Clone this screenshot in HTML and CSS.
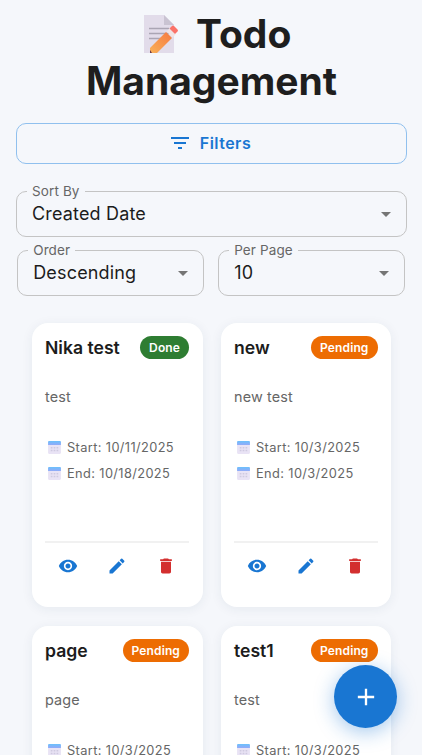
FILE: index.html
```html
<!doctype html>
<html>
<head>
	<title>Todo Management</title>
	<meta charset="utf-8"/>
	<link rel="stylesheet" href="styles.css">
</head>
<body>
	<svg class="defs" width="0" height="0">
		<defs>
			<linearGradient id="calTop" x1="0" y1="0" x2="0" y2="1">
				<stop offset="0" stop-color="#6cc0fc"/>
				<stop offset="1" stop-color="#93aaf8"/>
			</linearGradient>
			<linearGradient id="pencil" x1="0" y1="1" x2="1" y2="0">
				<stop offset="0" stop-color="#f9b25a"/>
				<stop offset="1" stop-color="#f6793f"/>
			</linearGradient>
			<symbol id="cal" viewBox="0 0 14 14">
				<rect x="1" y="1" width="12" height="12" rx="1" fill="#e9e3f5"/>
				<path d="M1 2a1 1 0 0 1 1-1h10a1 1 0 0 1 1 1v2.6H1z" fill="url(#calTop)"/>
				<path d="M3.5 6.5h1.6v1.400H3.500zM6.200 6.500h1.600v1.400H6.200zM8.900 6.500h1.600v1.400H8.900zM3.500 9h1.600v1.400H3.500zM6.200 9h1.600v1.400H6.200zM8.900 9h1.600v1.400H8.900z" fill="#cfcae0"/>
			</symbol>
			<symbol id="eye" viewBox="0 0 24 24"><path d="M12 4.500C7 4.500 2.730 7.610 1 12c1.730 4.390 6 7.500 11 7.500s9.270-3.110 11-7.500c-1.730-4.390-6-7.500-11-7.500zM12 17c-2.760 0-5-2.240-5-5s2.240-5 5-5 5 2.240 5 5-2.240 5-5 5zm0-8c-1.660 0-3 1.340-3 3s1.340 3 3 3 3-1.340 3-3-1.340-3-3-3z"/></symbol>
			<symbol id="edit" viewBox="0 0 24 24"><path d="M3 17.250V21h3.750L17.810 9.940l-3.750-3.750L3 17.250zM20.710 7.040c.39-.39.39-1.020 0-1.410l-2.340-2.340a.996.996 0 0 0-1.410 0l-1.830 1.830 3.750 3.750 1.830-1.830z"/></symbol>
			<symbol id="trash" viewBox="0 0 24 24"><path d="M6 19c0 1.100.9 2 2 2h8c1.100 0 2-.9 2-2V7H6v12zM19 4h-3.500l-1-1h-5l-1 1H5v2h14V4z"/></symbol>
			<symbol id="drop" viewBox="0 0 24 24"><path d="M7 10l5 5 5-5z"/></symbol>
		</defs>
	</svg>

	<div class="page">
		<h1 class="title">
			<svg class="title-icon" viewBox="0 0 34 38" width="34" height="38">
				<path d="M0 0h20l10 10v28H0z" fill="#e2dcea"/>
				<path d="M20 0l10 10H20z" fill="#c9c3d2"/>
				<path d="M5 13.500h20M5 18.500h20M5 23.500h14" stroke="#aaa5b4" stroke-width="1.300"/>
				<path d="M6 33l16-16 6 6-16 16H6z" fill="url(#pencil)"/>
				<path d="M22.500 16.500l3-3 6 6-3 3z" fill="#f0e4e4"/>
				<path d="M25.500 13.500l2.500-2.500a1.500 1.500 0 0 1 2 0l3.500 3.500a1.500 1.500 0 0 1 0 2L31 19z" fill="#fb7268"/>
				<path d="M6 35l2 3H6z" fill="#6b3a4a"/>
			</svg>
			<span class="title-gap"></span>Todo Management
		</h1>

		<button class="filter-btn">
			<svg class="filter-icon" viewBox="0 0 24 24" width="24" height="24"><path d="M10 18h4v-2h-4v2zM3 6v2h18V6H3zm3 7h12v-2H6v2z"/></svg>
			Filters
		</button>

		<div class="select select-full">
			<span class="select-label">Sort By</span>
			<span class="select-value">Created Date</span>
			<svg class="select-arrow"><use href="#drop"/></svg>
		</div>

		<div class="select-row">
			<div class="select">
				<span class="select-label">Order</span>
				<span class="select-value">Descending</span>
				<svg class="select-arrow"><use href="#drop"/></svg>
			</div>
			<div class="select">
				<span class="select-label">Per Page</span>
				<span class="select-value">10</span>
				<svg class="select-arrow"><use href="#drop"/></svg>
			</div>
		</div>

		<div class="cards">
			<div class="card">
				<div class="card-head">
					<span class="card-title">Nika test</span>
					<span class="chip chip-done">Done</span>
				</div>
				<p class="card-desc">test</p>
				<div class="card-date"><svg class="cal"><use href="#cal"/></svg>Start: 10/11/2025</div>
				<div class="card-date"><svg class="cal"><use href="#cal"/></svg>End: 10/18/2025</div>
				<div class="card-actions">
					<svg class="act act-blue"><use href="#eye"/></svg>
					<svg class="act act-blue"><use href="#edit"/></svg>
					<svg class="act act-red"><use href="#trash"/></svg>
				</div>
			</div>

			<div class="card">
				<div class="card-head">
					<span class="card-title">new</span>
					<span class="chip chip-pending">Pending</span>
				</div>
				<p class="card-desc">new test</p>
				<div class="card-date"><svg class="cal"><use href="#cal"/></svg>Start: 10/3/2025</div>
				<div class="card-date"><svg class="cal"><use href="#cal"/></svg>End: 10/3/2025</div>
				<div class="card-actions">
					<svg class="act act-blue"><use href="#eye"/></svg>
					<svg class="act act-blue"><use href="#edit"/></svg>
					<svg class="act act-red"><use href="#trash"/></svg>
				</div>
			</div>

			<div class="card">
				<div class="card-head">
					<span class="card-title">page</span>
					<span class="chip chip-pending">Pending</span>
				</div>
				<p class="card-desc">page</p>
				<div class="card-date"><svg class="cal"><use href="#cal"/></svg>Start: 10/3/2025</div>
				<div class="card-date"><svg class="cal"><use href="#cal"/></svg>End: 10/3/2025</div>
				<div class="card-actions">
					<svg class="act act-blue"><use href="#eye"/></svg>
					<svg class="act act-blue"><use href="#edit"/></svg>
					<svg class="act act-red"><use href="#trash"/></svg>
				</div>
			</div>

			<div class="card">
				<div class="card-head">
					<span class="card-title">test1</span>
					<span class="chip chip-pending">Pending</span>
				</div>
				<p class="card-desc">test</p>
				<div class="card-date"><svg class="cal"><use href="#cal"/></svg>Start: 10/3/2025</div>
				<div class="card-date"><svg class="cal"><use href="#cal"/></svg>End: 10/3/2025</div>
				<div class="card-actions">
					<svg class="act act-blue"><use href="#eye"/></svg>
					<svg class="act act-blue"><use href="#edit"/></svg>
					<svg class="act act-red"><use href="#trash"/></svg>
				</div>
			</div>
		</div>
	</div>

	<button class="fab">
		<svg viewBox="0 0 24 24" width="28" height="28"><path d="M19 13h-6v6h-2v-6H5v-2h6V5h2v6h6v2z"/></svg>
	</button>
</body>
</html>
```

FILE: styles.css
```css
html, body {
	height: 100%;
	overflow: hidden;
}
body {
	margin: 0;
	background-color: #f5f7fb;
	font-family: Inter, "Liberation Sans", sans-serif;
	color: #1c1c1c;
}
.defs {
	position: absolute;
}
.page {
	padding: 10px 15px 0 16px;
}

.title {
	margin: 0 0 19px;
	font-size: 39px;
	font-weight: 700;
	line-height: 47px;
	text-align: center;
	color: #1e1e1e;
}
.title-icon {
	margin-left: 12px;
	vertical-align: -5px;
}
.title-gap {
	display: inline-block;
	width: 9px;
}

.filter-btn {
	display: flex;
	align-items: center;
	justify-content: center;
	gap: 8px;
	width: 100%;
	height: 41px;
	padding: 0 0 2px;
	margin-bottom: 27px;
	background: transparent;
	border: 1px solid #90c0ee;
	border-radius: 10px;
	font-family: inherit;
	font-size: 16px;
	font-weight: 600;
	letter-spacing: 0.02857em;
	color: #1976d2;
}
.filter-icon {
	margin-left: -4px;
	fill: #1976d2;
}

.select {
	position: relative;
	display: flex;
	align-items: center;
	justify-content: space-between;
	box-sizing: border-box;
	height: 46px;
	padding: 0 15px;
	border: 1px solid #c4c4c4;
	border-radius: 10px;
}
.select-full {
	margin-bottom: 13px;
}
.select-row {
	display: grid;
	grid-template-columns: 187px 187px;
	gap: 14px;
	margin: 0 0 27px 1.2px;
}
.select-label {
	position: absolute;
	top: -9px;
	left: 10px;
	padding: 0 5px;
	background-color: #f5f7fb;
	font-size: 13.5px;
	letter-spacing: 0.00938em;
	line-height: 16px;
	color: #666;
}
.select-value {
	font-size: 18px;
	letter-spacing: 0.00938em;
	line-height: 24px;
	color: #1c1c1c;
}
.select-arrow {
	position: absolute;
	top: 10px;
	right: 8px;
	width: 24px;
	height: 24px;
	fill: #757575;
}

.cards {
	display: grid;
	grid-template-columns: 170.5px 170px;
	column-gap: 18.5px;
	row-gap: 19px;
	padding-left: 16px;
}
.card {
	box-sizing: border-box;
	height: 284px;
	padding: 12px 13.5px 0 13px;
	background-color: #fff;
	border-radius: 16px;
	box-shadow: 0 2px 12px rgba(30, 50, 90, 0.07);
}
.card-head {
	display: flex;
	align-items: center;
	justify-content: space-between;
	height: 24px;
}
.card-title {
	font-size: 17.6px;
	font-weight: 600;
	color: #1c1c1c;
}
.chip {
	height: 23px;
	padding: 0 9px;
	border-radius: 12px;
	font-size: 12px;
	font-weight: 600;
	letter-spacing: 0.01em;
	line-height: 23px;
	color: #fff;
}
.chip-done {
	background-color: #2e7d32;
}
.chip-pending {
	background-color: #ed6c02;
}
.card-desc {
	margin: 0 0 30px;
	padding-top: 28px;
	font-size: 14.4px;
	letter-spacing: 0.01071em;
	line-height: 20px;
	color: #666;
}
.card-date {
	display: flex;
	align-items: center;
	gap: 5px;
	height: 20px;
	margin-bottom: 6px;
	margin-left: 2px;
	font-size: 12.8px;
	letter-spacing: 0.03em;
	color: #666;
}
.cal {
	width: 15px;
	height: 15px;
}
.card-actions {
	display: flex;
	justify-content: space-between;
	align-items: center;
	margin-top: 58px;
	padding: 13px 13px 0;
	border-top: 2px solid #f1f1f1;
}
.act {
	width: 20px;
	height: 20px;
	flex: none;
}
.act-blue {
	fill: #1976d2;
}
.act-red {
	fill: #d32f2f;
}

.fab {
	position: fixed;
	right: 25px;
	bottom: 27px;
	display: flex;
	align-items: center;
	justify-content: center;
	width: 63px;
	height: 63px;
	padding: 0;
	background-color: #1976d2;
	border: none;
	border-radius: 50%;
	box-shadow: 0 4px 20px rgba(25, 118, 210, 0.4);
}
.fab svg {
	fill: #fff;
}
```
